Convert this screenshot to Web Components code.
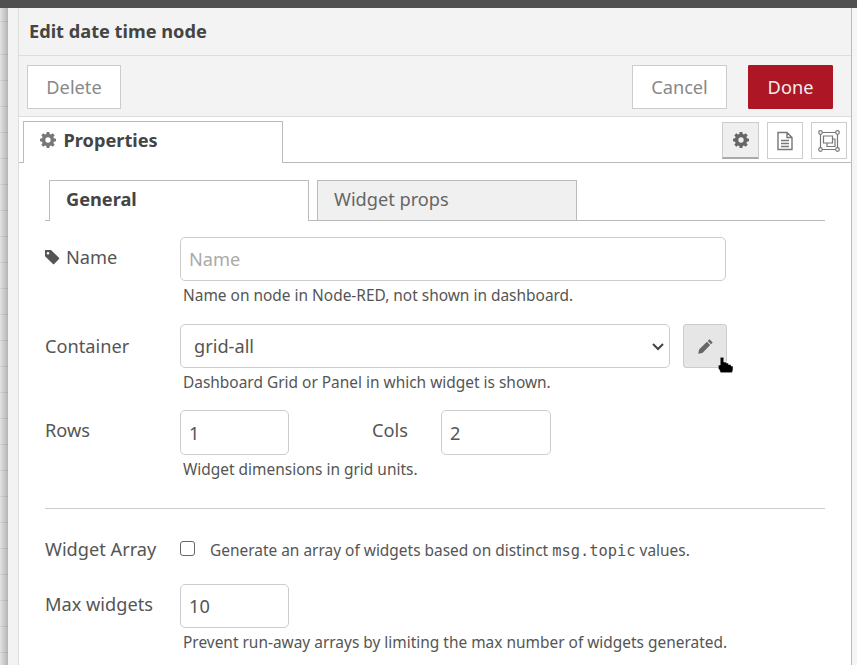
<!DOCTYPE html>
<html>
<head>
<meta charset="utf-8">
<title>Edit date time node</title>
<style>
html, body { margin: 0; height: 100%; overflow: hidden; }
body { font-family: "Noto Sans", sans-serif; font-size: 18.2px; color: #555; }
</style>
</head>
<body>
<edit-tray>
  <tray-toolbar slot="toolbar"></tray-toolbar>
  <props-tabs slot="tabs"></props-tabs>
  <form-tabs></form-tabs>
  <form-row label="Name" icon="tag" top="16" hint="Name on node in Node-RED, not shown in dashboard.">
    <input-box placeholder="Name" width="546"></input-box>
  </form-row>
  <form-row label="Container" label-height="43" top="19" hint="Dashboard Grid or Panel in which widget is shown.">
    <select-box value="grid-all"></select-box>
  </form-row>
  <form-row label="Rows" top="18" hint="Widget dimensions in grid units.">
    <input-box value="1" width="109" height="45"></input-box>
    <span class="cols" slot="after">Cols</span>
    <input-box value="2" width="110" height="45" slot="after"></input-box>
  </form-row>
  <array-row></array-row>
  <form-row label="Max widgets" top="13" hint="Prevent run-away arrays by limiting the max number of widgets generated.">
    <input-box value="10" width="109"></input-box>
  </form-row>
</edit-tray>
<script>
(function () {
    // --- small helper ---
    function defineEl(name, html, init) {
        var template = document.createElement('template');
        template.innerHTML = html;
        customElements.define(name, class extends HTMLElement {
            connectedCallback() {
                if (this.shadowRoot) return;
                this.attachShadow({ mode: 'open' });
                this.shadowRoot.appendChild(template.content.cloneNode(true));
                if (init) init.call(this, this.shadowRoot);
            }
        });
    }

    var GEAR = '<svg viewBox="0 0 24 24" width="16" height="16"><path fill="currentColor" fill-rule="evenodd" d="M10 0h4l.6 3.100 1.900.8L19.100 2 22 4.900l-1.900 2.600.8 1.900 3.100.6v4l-3.100.6-.8 1.900 1.900 2.600-2.900 2.900-2.600-1.900-1.900.8L14 24h-4l-.6-3.100-1.900-.8L4.900 22 2 19.100l1.900-2.600-.8-1.900L0 14v-4l3.100-.6.8-1.900L2 4.900 4.900 2l2.600 1.900 1.900-.8zM12 8a4 4 0 1 0 0 8 4 4 0 0 0 0-8z"/></svg>';

    defineEl('edit-tray', `
        <style>
        :host { display: flex; height: 665px; overflow: hidden; flex-direction: column; background: #fff; }
        .top { height: 8px; background: #505050; flex: none; }
        .main { flex: 1; display: flex; min-height: 0; }
        .canvas { width: 8px; flex: none; background: repeating-linear-gradient(to bottom, transparent 0 19px, rgba(0,0,0,.07) 19px 20px, transparent 20px 26px), linear-gradient(to right, #e2e2e2, #b4b4b4); background-position: 0 27px, 0 0; }
        .gutter { width: 10px; flex: none; background: #f3f3f3; border-right: 1px solid #ddd; }
        .tray { flex: 1; min-width: 0; display: flex; flex-direction: column; border-right: 1px solid #bbb; }
        .pad { width: 5px; flex: none; background: #f5f5f5; }
        h1 { margin: 0; height: 48px; flex: none; box-sizing: border-box; padding: 10px 0 0 10px; background: #f3f3f3; border-bottom: 1px solid #ddd; font-size: 18.2px; line-height: 26px; font-weight: 700; color: #444; }
        .body { padding: 0 26px; }
        </style>
        <div class="top"></div>
        <div class="main">
          <div class="canvas"></div>
          <div class="gutter"></div>
          <div class="tray">
            <h1>Edit date time node</h1>
            <slot name="toolbar"></slot>
            <slot name="tabs"></slot>
            <div class="body"><slot></slot></div>
          </div>
          <div class="pad"></div>
        </div>`);

    defineEl('tray-toolbar', `
        <style>
        :host { display: flex; height: 61px; flex: none; box-sizing: border-box; background: #f3f3f3; border-bottom: 1px solid #ddd; padding: 9px 18px 0 8px; align-items: flex-start; }
        .btn { box-sizing: border-box; height: 44px; display: flex; align-items: center; justify-content: center; border: 1px solid #ccc; background: #fff; color: #888; font-size: 18.2px; }
        .delete { width: 94px; margin-right: auto; }
        .cancel { width: 95px; margin-right: 21px; }
        .done { width: 85px; background: #ad1625; border-color: #ad1625; color: #eee; border-radius: 1px; }
        </style>
        <div class="btn delete">Delete</div>
        <div class="btn cancel">Cancel</div>
        <div class="btn done">Done</div>`);

    defineEl('props-tabs', `
        <style>
        :host { display: flex; height: 46px; flex: none; box-sizing: border-box; border-bottom: 1px solid #bbb; padding: 4px 4px 0 4px; align-items: flex-start; }
        .tab { box-sizing: border-box; width: 260px; height: 42px; background: #fff; border: 1px solid #bbb; border-bottom: 0; display: flex; align-items: center; gap: 7.5px; padding: 0 0 5px 16px; font-weight: 700; color: #444; font-size: 18.2px; margin-right: auto; }
        .tab span { color: #777; display: flex; }
        .ib { box-sizing: border-box; width: 36px; height: 37px; margin-top: 1px; border: 1px solid #ccc; background: #fff; color: #777; display: flex; align-items: center; justify-content: center; }
        .ib.on { width: 37px; background: #efefef; border-bottom: 2px solid #aaa; color: #666; }
        .ib + .ib { margin-left: 8px; }
        </style>
        <div class="tab"><span>${GEAR}</span>Properties</div>
        <div class="ib on">${GEAR}</div>
        <div class="ib"><svg width="18" height="20" viewBox="0 0 18 20" fill="none" stroke="currentColor" stroke-width="1.400"><path d="M2 1.500h9l5 5v12H2zM11 1.500v5h5M5 9.500h8M5 12.500h8M5 15.500h8"/></svg></div>
        <div class="ib"><svg width="24" height="24" viewBox="0 0 24 24" fill="none" stroke="currentColor" stroke-width="1.200"><path d="M3.500 3.500h17v17h-17z"/><path d="M6.500 7h9v7h-9zM10 14v3.500h8V10h-2.500"/><g fill="#fff"><circle cx="3.500" cy="3.500" r="1.800"/><circle cx="20.500" cy="3.500" r="1.800"/><circle cx="3.500" cy="20.500" r="1.800"/><circle cx="20.500" cy="20.500" r="1.800"/></g></svg></div>`);

    defineEl('form-tabs', `
        <style>
        :host { display: flex; height: 41px; margin-top: 17px; box-sizing: border-box; border-bottom: 1px solid #bbb; padding-left: 4px; align-items: flex-start; }
        .tab { box-sizing: border-box; height: 41px; display: flex; align-items: center; padding: 0 0 4px 16px; font-size: 18.2px; border: 1px solid #bbb; border-bottom: 0; }
        .a { width: 260px; background: #fff; font-weight: 700; color: #444; margin-right: 8px; }
        .b { width: 260px; height: 40px; padding-bottom: 4px; background: #f0f0f0; color: #666; }
        </style>
        <div class="tab a">General</div>
        <div class="tab b">Widget props</div>`);

    defineEl('form-row', `
        <style>
        :host { display: grid; grid-template-columns: 135px auto; font-size: 18.2px; color: #555; }
        .label { display: flex; align-items: center; gap: 5px; height: 39px; }
        .label svg { display: block; }
        .control { display: flex; align-items: flex-start; }
        .hint { grid-column: 2; margin: 4px 0 0 3px; font-size: 15.45px; line-height: 20px; color: #555; }
        ::slotted(.cols) { width: 152px; padding-left: 83px; box-sizing: border-box; height: 41px; line-height: 41px; }
        </style>
        <div class="label"></div>
        <div class="control"><slot></slot><slot name="after"></slot></div>
        <div class="hint"></div>`, function (root) {
            this.style.marginTop = this.getAttribute('top') + 'px';
            var label = root.querySelector('.label');
            if (this.hasAttribute('label-height')) label.style.height = this.getAttribute('label-height') + 'px';
            if (this.getAttribute('icon') === 'tag') {
                label.innerHTML = '<svg width="16" height="16" viewBox="1 0 16 16"><path fill="#555" fill-rule="evenodd" d="M1 1h6l8 7.800q.5.600 0 1.200L10.200 15q-.6.500-1.200 0L1 7.300zM4 3a1.300 1.300 0 1 0 0 2.600A1.300 1.300 0 0 0 4 3z"/></svg>';
            }
            label.appendChild(document.createTextNode(this.getAttribute('label')));
            root.querySelector('.hint').textContent = this.getAttribute('hint');
        });

    defineEl('input-box', `
        <style>
        :host { display: block; }
        input { display: block; box-sizing: border-box; height: 44px; border: 1px solid #ccc; border-radius: 5px; background: #fff; padding: 0 8px; font: inherit; font-size: 18.2px; color: #555; outline: none; }
        input::placeholder { color: #aaa; opacity: 1; }
        </style>
        <input type="text">`, function (root) {
            var input = root.querySelector('input');
            input.style.width = this.getAttribute('width') + 'px';
            if (this.hasAttribute('height')) input.style.height = this.getAttribute('height') + 'px';
            if (this.hasAttribute('placeholder')) input.placeholder = this.getAttribute('placeholder');
            if (this.hasAttribute('value')) input.value = this.getAttribute('value');
        });

    defineEl('select-box', `
        <style>
        :host { display: flex; align-items: flex-start; gap: 13px; }
        .sel { box-sizing: border-box; width: 490px; height: 44px; border: 1px solid #ccc; border-radius: 5px; display: flex; align-items: center; justify-content: space-between; padding: 0 4px 0 13px; background: #fff; font-size: 18.2px; color: #555; }
        .btn { position: relative; box-sizing: border-box; width: 44px; height: 44px; border: 1px solid #ccc; border-radius: 3px; background: #e6e6e6; display: flex; align-items: center; justify-content: center; color: #666; }
        .cursor { position: absolute; left: 34px; top: 32px; }
        </style>
        <div class="sel"><span></span>
          <svg width="14" height="14" viewBox="0 0 14 14" fill="none" stroke="#444" stroke-width="2"><path d="M2 5l5 5 5-5"/></svg>
        </div>
        <div class="btn">
          <svg width="17" height="17" viewBox="0 0 16 16"><path fill="currentColor" d="M11.700 1.200l3.100 3.100-1.600 1.600-3.100-3.100zM9.300 3.600l3.100 3.100-7.300 7.300-4 .9.900-4z"/></svg>
          <svg class="cursor" width="16" height="16" viewBox="0 0 16 16"><path fill="#000" stroke="#fff" stroke-width=".5" d="M2.200 .3h3.600v4.700h2.400v1h2.300v1.500H13v1.500h2V13l-1 2.700H2.500L1.500 13 .3 11.500V8h1.900z"/></svg>
        </div>`, function (root) {
            root.querySelector('span').textContent = this.getAttribute('value');
        });

    defineEl('array-row', `
        <style>
        :host { display: block; }
        hr { margin: 29px 0 0; border: 0; border-top: 1px solid #ccc; }
        .row { display: grid; grid-template-columns: 135px auto; align-items: center; margin-top: 21px; height: 41px; font-size: 18.2px; color: #555; }
        .name { margin-top: -4px; }
        .val { display: flex; align-items: center; font-size: 15.45px; margin-top: -2px; }
        .box { box-sizing: border-box; width: 15px; height: 15px; margin: -2px 15px 0 0; border: 1.500px solid #666; border-radius: 3px; background: #fff; flex: none; }
        code { font-family: "DejaVu Sans Mono", monospace; font-size: 15.4px; }
        </style>
        <hr>
        <div class="row">
          <div class="name">Widget Array</div>
          <div class="val"><span class="box"></span><span>Generate an array of widgets based on distinct <code>msg.topic</code> values.</span></div>
        </div>`);
})();
</script>
</body>
</html>
